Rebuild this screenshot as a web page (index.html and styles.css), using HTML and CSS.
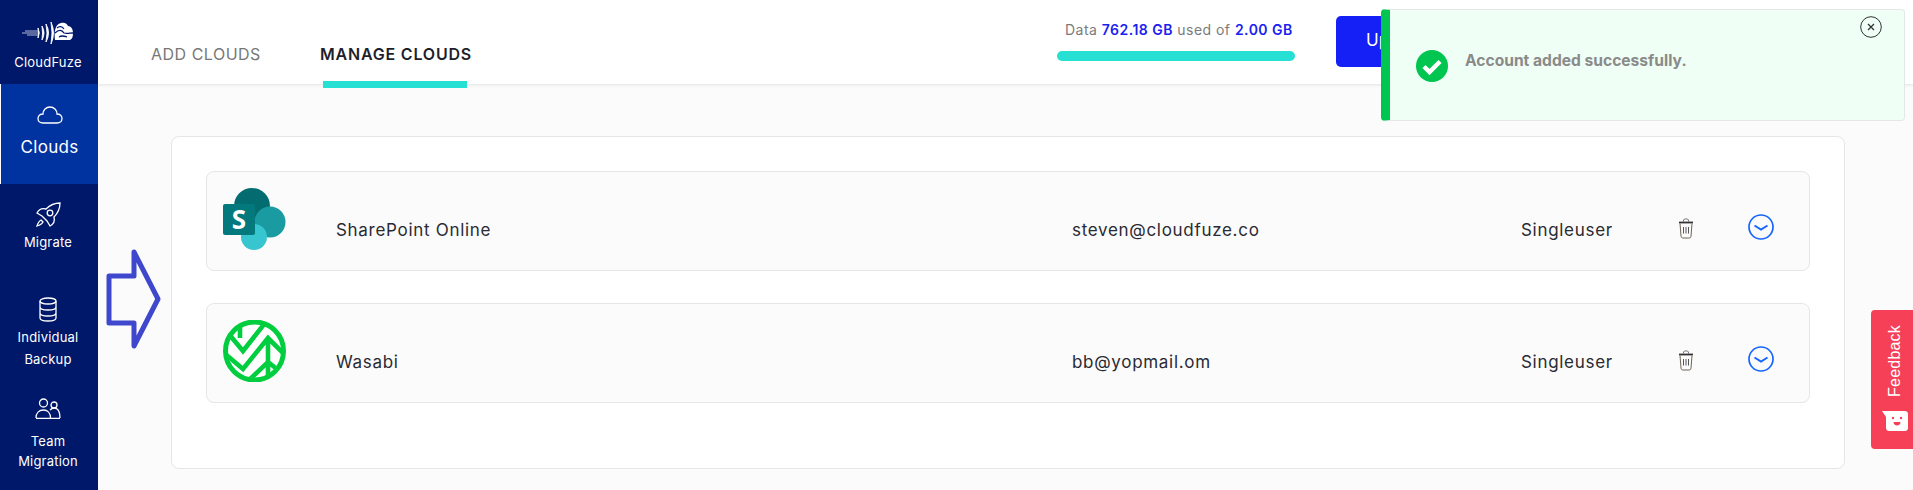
FILE: index.html
```html
<!DOCTYPE html>
<html lang="en">
<head>
<meta charset="utf-8">
<title>CloudFuze - Manage Clouds</title>
<link rel="stylesheet" href="styles.css">
</head>
<body>
<aside class="sidebar">
  <a class="brand">
    <svg class="brand-logo" viewBox="0 0 52 22" fill="none" stroke="#fff">
      <path d="M0 11H16M3 9H16M5 13H16" stroke-width=".7"/>
      <path d="M16 6Q18.500 11 16 16Q17 11 16 6ZM20 4Q24 11 20 18Q21 11 20 4ZM24 2Q29 11 24 20Q26 11 24 2ZM29 0Q34 11 29 22Q31 11 29 0Z" fill="#fff" stroke="#fff" stroke-width=".9"/>
      <path d="M33 18C32 10 33 2 39 1c4-1 6 1 7 3 3 0 5 3 5 7 0 4-1 6-3 7Z" fill="#fff" stroke="none"/>
      <path d="M33 11c4-4 7-3 9 0 3 1 6 0 9 0M35 6c2-2 5-2 7 1M37 15c3-2 5-1 8 0" stroke="#00186a" stroke-width="1.300"/>
    </svg>
    <span>CloudFuze</span>
  </a>
  <a class="nav-item nav-active">
    <svg class="ico-cloud" viewBox="0 0 26 18" fill="none" stroke="#fff" stroke-width="1.300"><path d="M6 17C3 17 1 15 1 12.500S3 8 6 8C6 4 9 1 13 1s7 3 7 7c3 0 5 2 5 4.500S23 17 20 17Z"/></svg>
    <span class="nav-big">Clouds</span>
  </a>
  <a class="nav-item nav-migrate">
    <svg class="ico-rocket" viewBox="0 0 26 26" fill="none" stroke="#fff" stroke-width="1.300"><path d="M7 14 2 11c2-4 5-5 9-4 4-4 8-6 14-6 0 6-2 10-6 14 1 4 0 7-4 9l-3-5Z"/><circle cx="15" cy="11" r="2.800"/><path d="M6 18c-2 1-3 3-4 6 3-1 5-2 6-4Z"/></svg>
    <span>Migrate</span>
  </a>
  <a class="nav-item nav-backup">
    <svg class="ico-db" viewBox="0 0 18 25" fill="none" stroke="#fff" stroke-width="1.300"><ellipse cx="9" cy="4" rx="8" ry="3"/><path d="M1 4v17c0 2 4 3 8 3s8-1 8-3V4M1 10c0 2 4 3 8 3s8-1 8-3M1 16c0 2 4 3 8 3s8-1 8-3"/></svg>
    <span>Individual</span><span>Backup</span>
  </a>
  <a class="nav-item nav-team">
    <svg class="ico-team" viewBox="0 0 26 21" fill="none" stroke="#fff" stroke-width="1.300"><circle cx="8.500" cy="5" r="4"/><circle cx="19" cy="7" r="3"/><path d="M1 20c0-5 3-8 7.500-8 4 0 7 3 7 8M15 12c1-1 3-2 4-2 4 0 6 4 6 10M1 20.300h24"/></svg>
    <span>Team</span><span>Migration</span>
  </a>
</aside>

<div class="main">
  <header class="topbar">
    <nav class="tabs">
      <a class="tab">ADD CLOUDS</a>
      <a class="tab tab-active">MANAGE CLOUDS</a>
    </nav>
    <div class="usage">
      <p class="usage-text">Data <b>762.18 GB</b> used of <b>2.00 GB</b></p>
      <div class="usage-bar"></div>
    </div>
    <a class="upgrade">Upgrade</a>
  </header>

  <section class="content">
    <div class="panel">
      <article class="row">
        <svg class="logo" viewBox="0 0 64 62">
          <circle cx="29" cy="18" r="18" fill="#036c70"/>
          <circle cx="47" cy="34" r="15.500" fill="#1a9ba1"/>
          <circle cx="31" cy="49" r="13" fill="#37c6d0"/>
          <rect x="0" y="16" width="32" height="31" rx="2" fill="#04797d"/>
          <text x="16" y="41" class="logo-s">S</text>
        </svg>
        <div class="cell cell-name">SharePoint Online</div>
        <div class="cell">steven@cloudfuze.co</div>
        <div class="cell">Singleuser</div>
        <svg class="trash" viewBox="0 0 16 22" fill="none" stroke="#555" stroke-width="1"><path d="M5.500 4.500V3c0-1.500 5-1.500 5 0v1.500" stroke="#777"/><path d="M1 5.500h14" stroke="#333" stroke-width="1.800"/><path d="M2 6.500 3 19c0 1.500 1 2 2 2h6c1 0 2-.5 2-2l1-12.500" stroke="#6e6558"/><path d="M5.500 10v6.500M8 10v6.500M10.500 10v6.500" stroke="#555"/></svg>
        <svg class="chev" viewBox="0 0 26 26" fill="none" stroke="#1565ff"><circle cx="13" cy="13" r="12" stroke-width="1.700"/><path d="M6.500 11.500 13 15.500l6.500-4" stroke-width="2"/></svg>
      </article>
      <article class="row">
        <svg class="logo" viewBox="0 0 64 62">
          <defs><clipPath id="wclip"><circle cx="31.500" cy="31" r="27"/></clipPath></defs>
          <circle cx="31.500" cy="31" r="29" fill="#fff" stroke="#00ce3e" stroke-width="5"/>
          <g clip-path="url(#wclip)" fill="none" stroke="#00ce3e" stroke-width="4.600">
            <path d="M0 32 20 49 45 18 63 36M5 13 20 31 42 3M45 18V60M24 62 45 42 60 54M17 3V18"/>
          </g>
        </svg>
        <div class="cell cell-name">Wasabi</div>
        <div class="cell">bb@yopmail.om</div>
        <div class="cell">Singleuser</div>
        <svg class="trash" viewBox="0 0 16 22" fill="none" stroke="#555" stroke-width="1"><path d="M5.500 4.500V3c0-1.500 5-1.500 5 0v1.500" stroke="#777"/><path d="M1 5.500h14" stroke="#333" stroke-width="1.800"/><path d="M2 6.500 3 19c0 1.500 1 2 2 2h6c1 0 2-.5 2-2l1-12.500" stroke="#6e6558"/><path d="M5.500 10v6.500M8 10v6.500M10.500 10v6.500" stroke="#555"/></svg>
        <svg class="chev" viewBox="0 0 26 26" fill="none" stroke="#1565ff"><circle cx="13" cy="13" r="12" stroke-width="1.700"/><path d="M6.500 11.500 13 15.500l6.500-4" stroke-width="2"/></svg>
      </article>
    </div>
  </section>
</div>

<svg class="arrow" viewBox="0 0 56 100" fill="none" stroke="#3f48cc" stroke-width="5" stroke-linejoin="round"><polygon points="3,27 28,27 28,3 52,50 28,97 28,74 3,74"/></svg>

<aside class="toast">
  <svg class="toast-check" viewBox="0 0 32 32"><circle cx="16" cy="16" r="16" fill="#00c551"/><path d="M8 16.500 13.500 22 24 11.500" fill="none" stroke="#fff" stroke-width="4.500"/></svg>
  <span class="toast-text">Account added successfully.</span>
  <svg class="toast-close" viewBox="0 0 22 22" fill="none" stroke="#333"><circle cx="11" cy="11" r="10.300" stroke-width="1"/><path d="M8 8l6 6M14 8l-6 6" stroke-width="1.300"/></svg>
</aside>

<a class="feedback">
  <span class="feedback-text">Feedback</span>
  <svg class="feedback-ico" viewBox="0 0 26 20"><path d="M0 0H23c1.500 0 3 1 3 3v14c0 1.500-1 3-3 3H7c-1.500 0-3-1-3-3V6Z" fill="#fff"/><circle cx="11" cy="7" r="1.200" fill="#f64058"/><circle cx="19" cy="7" r="1.200" fill="#f64058"/><path d="M11.500 11h7c0 2-1.500 3.500-3.500 3.500S11.500 13 11.500 11Z" fill="#f64058"/></svg>
</a>
</body>
</html>
```
FILE: styles.css
```css
* { box-sizing: border-box; }
html, body { height: 100%; }
body {
  margin: 0;
  display: flex;
  height: 490px;
  overflow: hidden;
  background: #fbfbfb;
  font-family: Inter, "Liberation Sans", sans-serif;
  color: #222;
}
.sidebar {
  width: 98px;
  flex: none;
  background: #00186a;
  color: #fff;
  display: flex;
  flex-direction: column;
  align-items: stretch;
  font-size: 13px;
  letter-spacing: .2px;
  text-align: center;
}
.brand {
  height: 84px;
  padding-top: 22px;
  display: flex;
  flex-direction: column;
  align-items: center;
  padding-right: 2px;
}
.brand-logo { width: 52px; height: 22px; margin-bottom: 10px; }
.nav-item {
  display: flex;
  flex-direction: column;
  align-items: center;
  padding-right: 2px;
}
.nav-active {
  height: 100px;
  padding: 22px 0 0;
  background: #0033a0;
  border-left: 1px solid #fff;
}
.nav-big { font-size: 17px; margin-top: 13px; letter-spacing: .3px; }
.ico-cloud { width: 26px; height: 18px; }
.nav-migrate { height: 106px; padding-top: 18px; }
.ico-rocket { width: 26px; height: 26px; margin-bottom: 6px; }
.nav-backup { height: 101px; padding-top: 7px; line-height: 22px; }
.ico-db { width: 18px; height: 25px; margin-bottom: 4px; }
.nav-team { padding-top: 7px; line-height: 20px; }
.ico-team { width: 26px; height: 21px; margin-bottom: 12px; }

.main { flex: 1; min-width: 0; display: flex; flex-direction: column; }
.topbar {
  height: 84px;
  flex: none;
  background: #fff;
  box-shadow: 0 1px 3px rgba(0, 0, 0, .1);
  display: flex;
  position: relative;
}
.tabs { display: flex; padding-left: 53px; width: 959px; }
.tab {
  font-size: 16px;
  color: #777;
  padding-top: 44px;
  letter-spacing: .5px;
  width: 169px;
  position: relative;
  white-space: nowrap;
}
.tab-active { font-weight: 600; color: #1f1f2b; letter-spacing: .8px; }
.tab-active::after {
  content: "";
  position: absolute;
  left: 3px;
  top: 81px;
  width: 144px;
  height: 7px;
  background: #26e0d4;
}
.usage { width: 279px; padding: 21px 0 0 0; }
.usage-text { margin: 0 0 0 8px; font-size: 14px; line-height: 18px; color: #7b7b7b; letter-spacing: .47px; white-space: nowrap; }
.usage-text b { font-weight: 600; color: #1a22f0; }
.usage-bar { width: 238px; height: 10px; margin-top: 12px; border-radius: 5px; background: #26e0d4; }
.upgrade {
  margin-top: 16px;
  height: 51px;
  width: 120px;
  padding: 14px 0 0 30px;
  background: #1420f5;
  color: #fff;
  font-size: 17px;
  border-radius: 5px;
}

.content { flex: 1; padding: 52px 68px 0 73px; }
.panel {
  height: 333px;
  padding: 34px;
  background: #fff;
  border: 1px solid #e6e6e6;
  border-radius: 8px;
  display: flex;
  flex-direction: column;
  gap: 32px;
}
.row {
  height: 100px;
  padding: 16px 0 0 16px;
  background: #fbfbfb;
  border: 1px solid #e6e6e6;
  border-radius: 8px;
  display: grid;
  grid-template-columns: 113px 736px 449px 157px 70px 26px;
  align-items: start;
}
.logo { width: 64px; height: 62px; }
.logo-s { font: 700 26px "Open Sans", sans-serif; fill: #fff; text-anchor: middle; }
.cell { font-size: 17px; line-height: 24px; margin-top: 30px; color: #2a2a33; letter-spacing: .7px; white-space: nowrap; }
.trash { width: 16px; height: 22px; margin-top: 29px; }
.chev { width: 26px; height: 26px; margin-top: 26px; }

.arrow { position: absolute; left: 105px; top: 249px; width: 58px; height: 100px; }
.toast {
  position: absolute;
  left: 1381px;
  top: 9px;
  width: 524px;
  height: 112px;
  background: #f0fff5;
  border: 1px solid #e3e8e5;
  border-left: 9px solid #00c551;
  border-radius: 4px;
  display: flex;
  align-items: flex-start;
}
.toast-check { width: 32px; height: 32px; margin: 40px 0 0 26px; flex: none; }
.toast-text { margin: 41px 0 0 17px; font-size: 15.600px; line-height: 20px; font-weight: 700; color: #8a8a8a; }
.toast-close { position: absolute; right: 22px; top: 6px; width: 22px; height: 22px; }
.feedback {
  position: absolute;
  left: 1871px;
  top: 310px;
  width: 42px;
  height: 139px;
  background: #f64058;
  border-radius: 4px 0 0 4px;
  color: #fff;
}
.feedback-text {
  position: absolute;
  left: 15px;
  top: 15px;
  writing-mode: vertical-rl;
  transform: rotate(180deg);
  font: 16px/18px "Liberation Sans", sans-serif;
  letter-spacing: .2px;
}
.feedback-ico { position: absolute; left: 11px; top: 101px; width: 26px; height: 20px; }
```
